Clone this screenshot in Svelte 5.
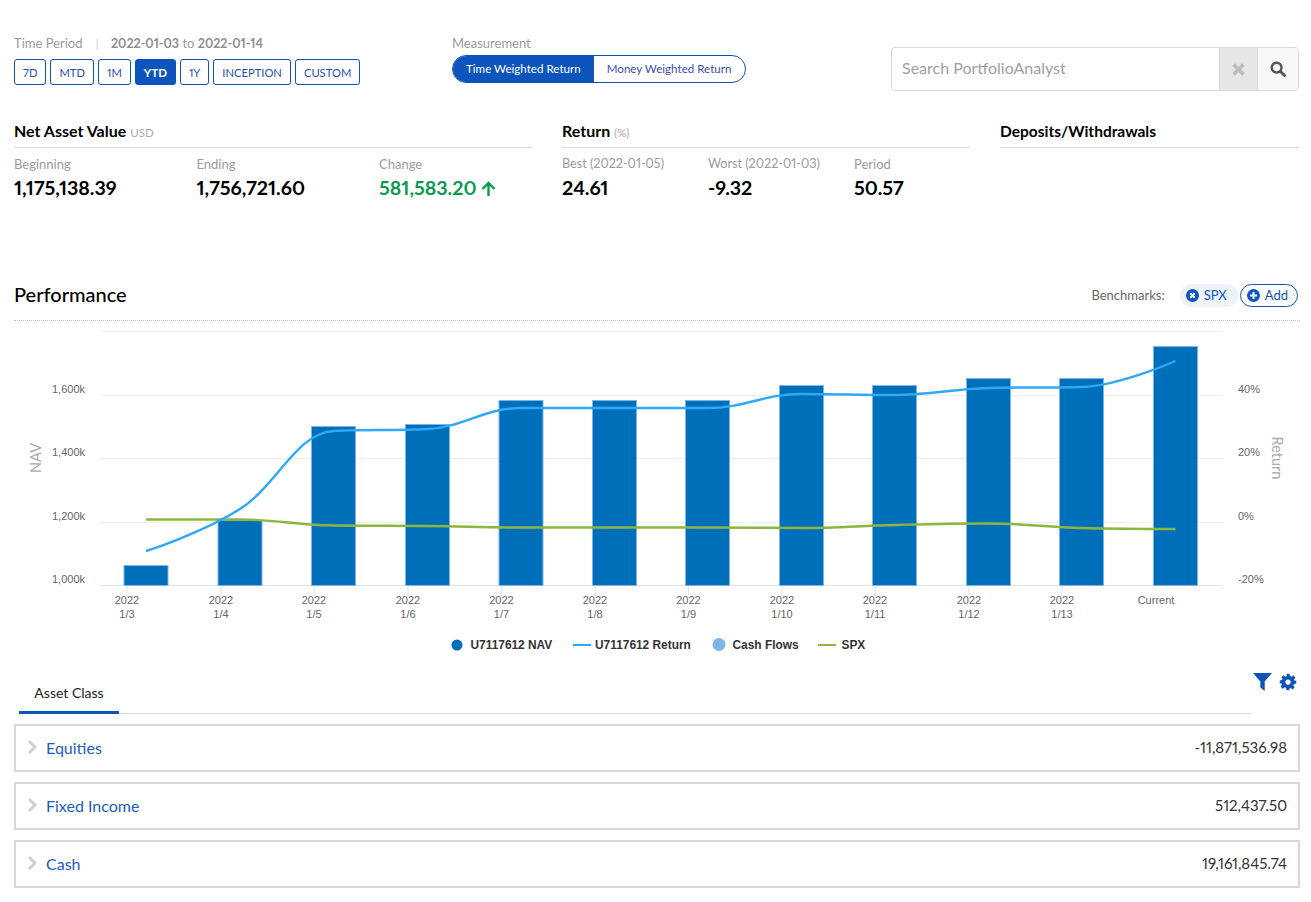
<script>
  const xs = [146, 240, 333.500, 427.5, 521, 614.5, 707.5, 801.5, 894.5, 988.5, 1081.5, 1175.500];
  const tops = [565, 520, 426, 424, 400, 400, 400, 385, 385, 378, 378, 346];
  const ret = [551, 509, 431, 429, 408, 408, 408, 394, 395, 388, 387, 361];
  const spx = [519.5, 519.5, 525.5, 526, 527.5, 527.5, 527.5, 528, 525, 523.5, 528, 529];
  const labelXs = [127, 221, 314, 408, 501.5, 595, 688.5, 782, 875, 969, 1062];
  const days = ['1/3', '1/4', '1/5', '1/6', '1/7', '1/8', '1/9', '1/10', '1/11', '1/12', '1/13'];
  const grid = [331, 395, 458, 522];
  const navLabels = [['1,600k', 389], ['1,400k', 452], ['1,200k', 516], ['1,000k', 579]];
  const retLabels = [['40%', 389], ['20%', 452], ['0%', 516], ['-20%', 579]];

  const periods = ['7D', 'MTD', '1M', 'YTD', '1Y', 'INCEPTION', 'CUSTOM'];
  const rows = [['Equities', '-11,871,536.98'], ['Fixed Income', '512,437.50'], ['Cash', '19,161,845.74']];

  function spline(ys) {
    const s = 1.5;
    const ctrl = ys.map((y, i) => {
      const x = xs[i];
      if (i === 0 || i === ys.length - 1) return { lx: x, ly: y, rx: x, ry: y };
      const lx = (s * x + xs[i - 1]) / (s + 1);
      const rx = (s * x + xs[i + 1]) / (s + 1);
      let ly = (s * y + ys[i - 1]) / (s + 1);
      let ry = (s * y + ys[i + 1]) / (s + 1);
      const c = ((ry - ly) * (rx - x)) / (rx - lx) + y - ry;
      ly += c;
      ry += c;
      if (ly > ys[i - 1] && ly > y) { ly = Math.max(ys[i - 1], y); ry = 2 * y - ly; }
      else if (ly < ys[i - 1] && ly < y) { ly = Math.min(ys[i - 1], y); ry = 2 * y - ly; }
      if (ry > ys[i + 1] && ry > y) { ry = Math.max(ys[i + 1], y); ly = 2 * y - ry; }
      else if (ry < ys[i + 1] && ry < y) { ry = Math.min(ys[i + 1], y); ly = 2 * y - ry; }
      return { lx, ly, rx, ry };
    });
    let d = `M${xs[0]} ${ys[0]}`;
    for (let i = 1; i < ys.length; i++) {
      d += ` C${ctrl[i - 1].rx} ${ctrl[i - 1].ry} ${ctrl[i].lx} ${ctrl[i].ly} ${xs[i]} ${ys[i]}`;
    }
    return d;
  }
  const retPath = spline(ret);
  const spxPath = spline(spx);
</script>

<div class="page">
  <div class="top">
    <div class="period">
      <div class="period-label">Time Period <span class="sep">|</span> <b>2022-01-03</b> to <b>2022-01-14</b></div>
      <div class="period-btns">
        {#each periods as p}
          <span class="pbtn" class:active={p === 'YTD'}>{p}</span>
        {/each}
      </div>
    </div>
    <div class="measure">
      <div class="measure-label">Measurement</div>
      <div class="toggle">
        <span class="tog on">Time Weighted Return</span>
        <span class="tog">Money Weighted Return</span>
      </div>
    </div>
    <div class="search">
      <span class="search-text">Search PortfolioAnalyst</span>
      <span class="search-x">
        <svg width="13" height="13" viewBox="0 0 12 12"><path d="M1.500 1.500l9 9M10.500 1.500l-9 9" stroke="#bdbdbd" stroke-width="3.4" fill="none"/></svg>
      </span>
      <span class="search-go">
        <svg width="16" height="16" viewBox="0 0 16 16"><circle cx="6.6" cy="6.6" r="4.9" stroke="#555" stroke-width="2.4" fill="none"/><path d="M10.2 10.2l4.4 4.4" stroke="#555" stroke-width="2.8" stroke-linecap="round"/></svg>
      </span>
    </div>
  </div>

  <div class="stats">
    <section class="nav">
      <h3>Net Asset Value <small>USD</small></h3>
      <div class="cols">
        <div class="c1"><label>Beginning</label><strong>1,175,138.39</strong></div>
        <div class="c2"><label>Ending</label><strong>1,756,721.60</strong></div>
        <div><label>Change</label><strong class="green">581,583.20
          <svg class="up" width="15" height="15" viewBox="0 0 15 15"><path d="M7.500 15V2M1.500 8l6-6 6 6" stroke="#0a9a50" stroke-width="2.400" fill="none"/></svg></strong></div>
      </div>
    </section>
    <section class="ret">
      <h3>Return <small>(%)</small></h3>
      <div class="cols">
        <div class="r1"><label class="date">Best (2022-01-05)</label><strong>24.61</strong></div>
        <div class="r2"><label class="date">Worst (2022-01-03)</label><strong>-9.32</strong></div>
        <div><label>Period</label><strong>50.57</strong></div>
      </div>
    </section>
    <section class="dep">
      <h3>Deposits/Withdrawals</h3>
    </section>
  </div>

  <div class="perf-head">
    <h2>Performance</h2>
    <div class="bench">
      <span class="bench-label">Benchmarks:</span>
      <span class="chip">
        <svg width="13" height="13" viewBox="0 0 13 13"><circle cx="6.5" cy="6.5" r="6.5" fill="#0d55bd"/><path d="M4.3 4.3l4.4 4.4M8.7 4.3l-4.4 4.4" stroke="#fff" stroke-width="2"/></svg>
        SPX
      </span>
      <span class="chip add">
        <svg width="13" height="13" viewBox="0 0 13 13"><circle cx="6.5" cy="6.5" r="6.5" fill="#0d55bd"/><path d="M6.5 3v7M3 6.5h7" stroke="#fff" stroke-width="2"/></svg>
        Add
      </span>
    </div>
  </div>

  <svg class="chart" width="1311" height="330" viewBox="0 321 1311 330">
    {#each grid as y}
      <line x1="100" x2="1222" y1={y + 0.5} y2={y + 0.5} stroke="#eeeeee" />
    {/each}
    <line x1="100" x2="1222" y1="585.5" y2="585.5" stroke="#e0e5ef" />
    {#each labelXs as x}
      <line x1={x} x2={x} y1="586" y2="596" stroke="#dbe3f0" />
    {/each}

    {#each navLabels as [t, y]}
      <text class="tick" x="85" y={y + 4} text-anchor="end">{t}</text>
    {/each}
    {#each retLabels as [t, y]}
      <text class="tick" x="1238" y={y + 4}>{t}</text>
    {/each}
    <text class="axis" transform="translate(41 458) rotate(-90)" text-anchor="middle">NAV</text>
    <text class="axis" transform="translate(1272 458) rotate(90)" text-anchor="middle">Return</text>

    {#each xs as x, i}
      <rect x={x - 22} y={tops[i] + 0.5} width="44" height={585 - tops[i]} fill="#006fba" stroke="#7cb5ec" />
    {/each}
    <path d={spxPath} fill="none" stroke="#8db640" stroke-width="2.4" />
    <path d={retPath} fill="none" stroke="#2ea8fb" stroke-width="2.4" />

    {#each labelXs as x, i}
      <text class="tick" x={x} y="604" text-anchor="middle">2022</text>
      <text class="tick" x={x} y="618" text-anchor="middle">{days[i]}</text>
    {/each}
    <text class="tick" x="1156" y="604" text-anchor="middle">Current</text>

    <circle cx="457" cy="645" r="5.5" fill="#006fba" />
    <text class="legend" x="470.5" y="649">U7117612 NAV</text>
    <line x1="573" x2="591" y1="645" y2="645" stroke="#2ea8fb" stroke-width="2" />
    <text class="legend" x="595" y="649">U7117612 Return</text>
    <circle cx="719" cy="644.5" r="6.5" fill="#7cb5ec" />
    <text class="legend" x="732.5" y="649">Cash Flows</text>
    <line x1="818" x2="836" y1="645" y2="645" stroke="#8db640" stroke-width="2" />
    <text class="legend" x="841.5" y="649">SPX</text>
  </svg>

  <div class="tabs">
    <div class="tabbar"><span class="tab">Asset Class</span></div>
    <div class="tools">
      <svg width="19" height="18" viewBox="0 0 19 18"><path d="M0 0h19L11.700 8.500V18L7.300 14.500V8.500z" fill="#0d55bd"/></svg>
      <svg width="18" height="18" viewBox="0 0 24 24"><path fill="#0d55bd" fill-rule="evenodd" d="M10 1h4l.6 3.100 1.900.8 2.600-1.800 2.800 2.800-1.800 2.600.8 1.900L23 10v4l-3.100.6-.8 1.900 1.800 2.600-2.800 2.800-2.600-1.800-1.900.8L14 23h-4l-.6-3.100-1.900-.8-2.600 1.800-2.800-2.800 1.800-2.600-.8-1.900L1 14v-4l3.100-.6.800-1.900L3.100 5.900l2.800-2.800 2.600 1.800 1.900-.8zM12 8.500a3.500 3.500 0 1 0 0 7 3.500 3.500 0 0 0 0-7z"/></svg>
    </div>
  </div>

  <div class="rows">
    {#each rows as [name, val]}
      <div class="row">
        <svg class="chev" width="10" height="16" viewBox="0 0 10 16"><path d="M2 2l6 6-6 6" stroke="#d0d0d0" stroke-width="3" fill="none"/></svg>
        <span class="name">{name}</span>
        <span class="val">{val}</span>
      </div>
    {/each}
  </div>
</div>

<style>
  :global(body) {
    margin: 0;
    background: #fff;
  }
  .page {
    width: 1311px;
    height: 902px;
    overflow: hidden;
    box-sizing: border-box;
    padding: 34px 12px 0 14px;
    font-family: Lato, "Liberation Sans", sans-serif;
    font-variant-numeric: proportional-nums;
    color: #000;
  }
  .top {
    display: flex;
    height: 58px;
  }
  .period {
    width: 438px;
  }
  .period-label {
    font-size: 13px;
    line-height: 18px;
    color: #9b9b9b;
  }
  .period-label b {
    font-size: 12.500px;
    font-weight: 700;
    color: #8e8e8e;
  }
  .sep {
    margin: 0 9px 0 10px;
    color: #ccc;
    font-size: 11px;
  }
  .period-btns {
    display: flex;
    gap: 4px;
    margin-top: 6px;
  }
  .pbtn {
    height: 26px;
    box-sizing: border-box;
    padding: 0 8px;
    display: flex;
    align-items: center;
    border: 1px solid #0d55bd;
    border-radius: 3px;
    font-size: 11.200px;
    color: #2a4fb0;
  }
  .pbtn.active {
    background: #0d55bd;
    color: #fff;
    font-size: 11.500px;
    font-weight: 700;
  }
  .measure {
    width: 439px;
  }
  .measure-label {
    font-size: 13px;
    line-height: 18px;
    color: #9b9b9b;
  }
  .toggle {
    display: inline-flex;
    margin-top: 3px;
    height: 28px;
    box-sizing: border-box;
    border: 1px solid #0d55bd;
    border-radius: 14px;
    overflow: hidden;
  }
  .tog {
    display: flex;
    align-items: center;
    padding: 0 13px 1px;
    font-size: 11.600px;
    color: #3a4fb0;
  }
  .tog.on {
    background: #0d55bd;
    color: #fff;
  }
  .search {
    width: 408px;
    height: 44px;
    margin-top: 13px;
    box-sizing: border-box;
    display: flex;
    border: 1px solid #d8d8d8;
    border-radius: 4px;
    overflow: hidden;
  }
  .search-text {
    flex: 1;
    padding: 0 0 3px 10px;
    display: flex;
    align-items: center;
    font-size: 16px;
    color: #a0a0a0;
  }
  .search-x {
    width: 37px;
    background: #e6e6e6;
    border-left: 1px solid #d8d8d8;
    border-right: 1px solid #d8d8d8;
    display: flex;
    align-items: center;
    justify-content: center;
  }
  .search-go {
    width: 40px;
    background: #f7f7f7;
    display: flex;
    align-items: center;
    justify-content: center;
  }
  .stats {
    display: flex;
    margin-top: 30px;
    height: 153px;
  }
  section h3 {
    margin: 0;
    height: 25px;
    font-size: 16px;
    line-height: 18px;
    font-weight: 700;
    border-bottom: 1px solid #d8d8d8;
  }
  .dep h3 {
    font-size: 15.500px;
  }
  section small {
    font-size: 11.500px;
    font-weight: 400;
    color: #aaa;
  }
  .nav {
    width: 518px;
    margin-right: 30px;
  }
  .ret {
    width: 408px;
    margin-right: 30px;
  }
  .dep {
    width: 299px;
  }
  .cols {
    display: flex;
    margin-top: 7px;
  }
  .cols label {
    display: block;
    font-size: 13px;
    line-height: 18px;
    color: #9b9b9b;
  }
  .cols label.date {
    font-size: 12.600px;
  }
  .cols strong {
    display: block;
    font-size: 19.600px;
    line-height: 29px;
    font-weight: 700;
    white-space: nowrap;
  }
  .c1, .c2 {
    width: 182.500px;
  }
  .r1 {
    width: 146px;
  }
  .r2 {
    width: 146px;
  }
  .green {
    color: #0a9a50;
  }
  .up {
    vertical-align: -1px;
  }
  .perf-head {
    display: flex;
    justify-content: space-between;
    align-items: center;
    height: 40px;
    padding-bottom: 5px;
    border-bottom: 1px dotted #bbb;
    margin-right: -1px;
  }
  .perf-head h2 {
    margin: 0 0 2px;
    font-size: 20px;
    font-weight: 500;
  }
  .bench {
    display: flex;
    align-items: center;
    gap: 2px;
    margin-right: 2px;
  }
  .bench-label {
    font-size: 13px;
    color: #666;
    margin-right: 13px;
  }
  .chip {
    display: flex;
    align-items: center;
    gap: 5px;
    height: 23px;
    box-sizing: border-box;
    padding: 0 11px 0 6px;
    border-radius: 12px;
    background: #eef2f9;
    font-size: 13px;
    color: #0d55bd;
  }
  .chip.add {
    background: #fff;
    border: 1px solid #0d55bd;
    padding: 0 9px 0 6px;
  }
  .chart {
    display: block;
    margin-left: -14px;
  }
  .tick {
    font: 11px "Liberation Sans", Arial, sans-serif;
    fill: #666;
  }
  .axis {
    font: 14.500px Lato, "Liberation Sans", sans-serif;
    fill: #aaa;
  }
  .legend {
    font: 700 11.900px "Liberation Sans", Arial, sans-serif;
    fill: #333;
  }
  .tabs {
    display: flex;
    margin-top: 22px;
    position: relative;
  }
  .tabbar {
    width: 1232px;
    margin-left: 5px;
    height: 41px;
    box-sizing: border-box;
    border-bottom: 1px solid #d8d8d8;
  }
  .tab {
    display: block;
    width: 100px;
    height: 41px;
    box-sizing: border-box;
    border-bottom: 3px solid #0d55bd;
    text-align: center;
    font-size: 14px;
    line-height: 40px;
    color: #222;
  }
  .tools {
    position: absolute;
    right: 2px;
    top: 0;
    display: flex;
    gap: 7px;
    align-items: center;
  }
  .rows {
    display: flex;
    flex-direction: column;
    gap: 10px;
    margin-top: 10px;
    margin-right: -1px;
  }
  .row {
    height: 48px;
    box-sizing: border-box;
    border: 2px solid #d8d8d8;
    display: flex;
    align-items: center;
    padding: 0 11px 2px 11px;
  }
  .chev {
    margin-right: 9px;
  }
  .name {
    font-size: 16px;
    color: #1e5cc0;
    flex: 1;
  }
  .val {
    font-size: 15px;
    color: #333;
  }
</style>
